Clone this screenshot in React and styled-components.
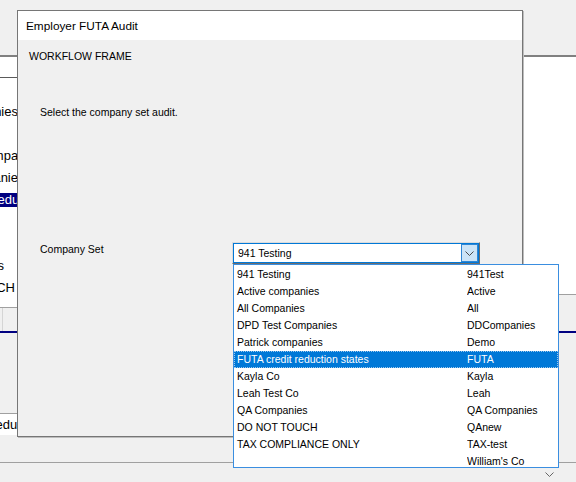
import React from "react";
import styled, { createGlobalStyle } from "styled-components";

const GlobalStyle = createGlobalStyle`
  html, body {
    margin: 0;
    padding: 0;
    background: #f0f0f0;
  }
  body {
    font-family: "Liberation Sans", Arial, sans-serif;
  }
`;

const Desktop = styled.div`
  position: relative;
  width: 576px;
  height: 482px;
  overflow: hidden;
  background: #f0f0f0;
`;

// ---- window behind the dialog ----
const BackWindow = styled.div`
  display: flex;
  flex-direction: column;
  height: 100%;
`;

const TopArea = styled.div`
  height: 55px;
  border-bottom: 2px solid #808080;
`;

const ContentRow = styled.div`
  display: flex;
`;

const LeftPane = styled.div`
  flex: 1;
  display: flex;
  flex-direction: column;
`;

const PaneStrip = styled.div`
  height: 20px;
  background: #fff;
  border-bottom: 1px solid #5a5a5a;
`;

const NameColumn = styled.div`
  width: 18px;
  height: 228px;
  padding-top: 1px;
  overflow: hidden;
  background: #fff;
`;

const NameRow = styled.div`
  height: 22px;
  display: flex;
  align-items: center;
  justify-content: flex-end;
  white-space: nowrap;
  font-size: 13px;
`;

const NameText = styled.span`
  line-height: 14px;
  margin-right: ${(p) => p.$shift || 0}px;
  background: ${(p) => (p.$selected ? "#000080" : "transparent")};
  color: ${(p) => (p.$selected ? "#fff" : "#000")};
`;

const HeaderStrip = styled.div`
  height: 23px;
  border-top: 1px solid #a0a0a0;
  display: flex;
`;

const HeaderCell = styled.div`
  width: ${(p) => p.$w}px;
  border-right: 1px solid #d5d5d5;
`;

const RightPane = styled.div`
  flex: 1;
`;

const WhiteArea = styled.div`
  height: 237px;
  background: #fff;
  border-bottom: 1px solid #a0a0a0;
`;

const NavyRule = styled.div`
  height: 2px;
  background: #000080;
`;

const Gap = styled.div`
  height: ${(p) => p.$h}px;
`;

const TextBox = styled.div`
  width: 18px;
  height: 21px;
  overflow: hidden;
  background: #fff;
  border-top: 1px solid #a0a0a0;
  display: flex;
  align-items: center;
  justify-content: flex-end;
  white-space: nowrap;
  font-size: 13px;
`;

const BottomBar = styled.div`
  flex: 1;
  border-top: 1px solid #a0a0a0;
  display: flex;
  justify-content: flex-end;
  padding-right: 17px;
`;

const ChevronBox = styled.div`
  width: 19px;
  padding-top: 3px;
  display: flex;
  align-items: center;
  justify-content: center;
`;

// ---- dialog ----
const Dialog = styled.div`
  position: absolute;
  left: 17px;
  top: 10px;
  width: 506px;
  height: 427px;
  box-sizing: border-box;
  border: 1px solid #767676;
  box-shadow: 1px 1px 0 #bdbdbd;
  background: #f0f0f0;
  display: flex;
  flex-direction: column;
`;

const TitleBar = styled.div`
  height: 29px;
  background: #fff;
  display: flex;
  align-items: center;
  padding-left: 8px;
  font-size: 11.8px;
  color: #000;
`;

const Body = styled.div`
  padding: 10px 0 0 11px;
  font-size: 10.5px;
  line-height: 13px;
  color: #000;
`;

const Inner = styled.div`
  margin-left: 11px;
  padding-top: 43px;
`;

const SetRow = styled.div`
  margin-top: 123px;
  display: flex;
  align-items: flex-start;
`;

const SetLabel = styled.div`
  width: 192px;
  padding-top: 1px;
`;

const Combo = styled.div`
  position: relative;
  width: 248px;
  height: 22px;
  box-sizing: border-box;
  border: 1px solid;
  border-color: #dcdcdc #6d6d6d #6d6d6d #dcdcdc;
`;

const Field = styled.div`
  height: 100%;
  box-sizing: border-box;
  border: 1px solid #0078d7;
  background: #fff;
  display: flex;
  align-items: center;
`;

const FieldText = styled.div`
  flex: 1;
  padding: 1px 0 0 4px;
`;

const DropButton = styled.div`
  width: 17px;
  height: 18px;
  box-sizing: border-box;
  background: #cce4f7;
  border: 1px solid #2f86d4;
  display: flex;
  align-items: center;
  justify-content: center;
`;

const DropList = styled.div`
  position: absolute;
  top: calc(100% + 1px);
  left: 0;
  width: 326px;
  height: 204px;
  box-sizing: border-box;
  padding-top: 1px;
  border: 1px solid #3a8ee0;
  background: #fff;
  overflow: hidden;
  z-index: 2;
`;

const ListRow = styled.div`
  display: grid;
  grid-template-columns: 233px 1fr;
  height: 17px;
  line-height: 17px;
  box-sizing: border-box;
  white-space: nowrap;
  background: ${(p) => (p.$selected ? "#0078d7" : "transparent")};
  color: ${(p) => (p.$selected ? "#fff" : "#000")};
  outline: ${(p) => (p.$selected ? "1px dotted #9cc8ee" : "none")};
  outline-offset: -1px;
`;

const Cell = styled.div`
  padding-left: ${(p) => p.$pad || 0}px;
  overflow: hidden;
`;

const Chevron = ({ color = "#555" }) => (
  <svg width="9" height="5" viewBox="0 0 9 5">
    <path d="M0.5 0.5 L4.5 4.5 L8.5 0.5" fill="none" stroke={color} strokeWidth="1" />
  </svg>
);

const backNames = [
  { text: "" },
  { text: "All Companies", shift: 0 },
  { text: "" },
  { text: "Active companies", shift: -24 },
  { text: "DPD Test Companies", shift: -6.5 },
  { text: "FUTA credit reduction states", shift: -67, selected: true },
  { text: "" },
  { text: "" },
  { text: "Patrick companies", shift: 14 },
  { text: "DO NOT TOUCH", shift: 3 },
];

const companySets = [
  ["941 Testing", "941Test"],
  ["Active companies", "Active"],
  ["All Companies", "All"],
  ["DPD Test Companies", "DDCompanies"],
  ["Patrick companies", "Demo"],
  ["FUTA credit reduction states", "FUTA"],
  ["Kayla Co", "Kayla"],
  ["Leah Test Co", "Leah"],
  ["QA Companies", "QA Companies"],
  ["DO NOT TOUCH", "QAnew"],
  ["TAX COMPLIANCE ONLY", "TAX-test"],
  ["", "William's Co"],
];

export default function App() {
  const selected = "FUTA";
  return (
    <>
      <GlobalStyle />
      <Desktop>
        <BackWindow>
          <TopArea />
          <ContentRow>
            <LeftPane>
              <PaneStrip />
              <NameColumn>
                {backNames.map((n, i) => (
                  <NameRow key={i}>
                    {n.text && (
                      <NameText $shift={n.shift} $selected={n.selected}>
                        {n.text}
                      </NameText>
                    )}
                  </NameRow>
                ))}
              </NameColumn>
              <HeaderStrip>
                <HeaderCell $w={2} />
                <HeaderCell $w={60} />
              </HeaderStrip>
            </LeftPane>
            <RightPane>
              <WhiteArea />
            </RightPane>
          </ContentRow>
          <NavyRule />
          <Gap $h={80} />
          <TextBox>
            <NameText $shift={-65}>FUTA credit reduction states</NameText>
          </TextBox>
          <Gap $h={27} />
          <BottomBar>
            <ChevronBox>
              <Chevron color="#666" />
            </ChevronBox>
          </BottomBar>
        </BackWindow>

        <Dialog>
          <TitleBar>Employer FUTA Audit</TitleBar>
          <Body>
            <div>WORKFLOW FRAME</div>
            <Inner>
              <div>Select the company set audit.</div>
              <SetRow>
                <SetLabel>Company Set</SetLabel>
                <Combo>
                  <Field>
                    <FieldText>941 Testing</FieldText>
                    <DropButton>
                      <Chevron color="#4a4a4a" />
                    </DropButton>
                  </Field>
                  <DropList>
                    {companySets.map(([name, code]) => (
                      <ListRow key={code} $selected={code === selected}>
                        <Cell $pad={3}>{name}</Cell>
                        <Cell>{code}</Cell>
                      </ListRow>
                    ))}
                  </DropList>
                </Combo>
              </SetRow>
            </Inner>
          </Body>
        </Dialog>
      </Desktop>
    </>
  );
}
